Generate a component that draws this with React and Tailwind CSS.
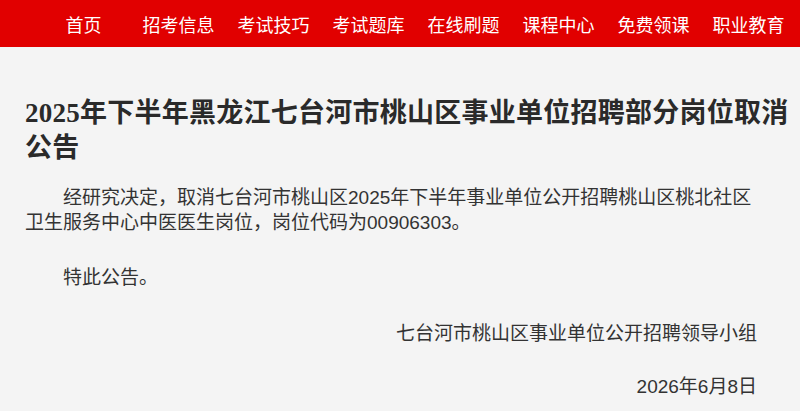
import React from 'react';

const navItems = ['首页', '招考信息', '考试技巧', '考试题库', '在线刷题', '课程中心', '免费领课', '职业教育'];

export default function App() {
  return (
    <div className="w-[800px] h-[411px] overflow-hidden bg-[#f4f4f4] font-['Liberation_Sans','Noto_Sans_CJK_SC',sans-serif] text-[#333]">
      <nav className="h-[47px] bg-[#e10000] pl-[36px] flex items-center">
        {navItems.map((item) => (
          <a key={item} className="w-[95px] text-center text-white text-[18px] leading-none font-['Noto_Sans_CJK_SC',serif]">
            {item}
          </a>
        ))}
      </nav>

      <main className="px-[25px] pt-[49px]">
        <h1 className="text-[27px] leading-[35px] font-bold tracking-[0.25px] text-[#2a2a2a] whitespace-nowrap font-['Liberation_Serif','Noto_Sans_CJK_SC',serif]">
          <span className="block">2025年下半年黑龙江七台河市桃山区事业单位招聘部分岗位取消</span>
          <span className="block">公告</span>
        </h1>

        <div className="w-[732px] mt-[19px] text-[19px] leading-[25px]">
          <p className="whitespace-nowrap">
            <span className="block pl-[38px]">经研究决定，取消七台河市桃山区2025年下半年事业单位公开招聘桃山区桃北社区</span>
            <span className="block">卫生服务中心中医医生岗位，岗位代码为00906303。</span>
          </p>
          <p className="mt-[30px] pl-[38px]">特此公告。</p>
          <p className="mt-[31px] text-right">七台河市桃山区事业单位公开招聘领导小组</p>
          <p className="mt-[28px] text-right">2026年6月8日</p>
        </div>
      </main>
    </div>
  );
}
